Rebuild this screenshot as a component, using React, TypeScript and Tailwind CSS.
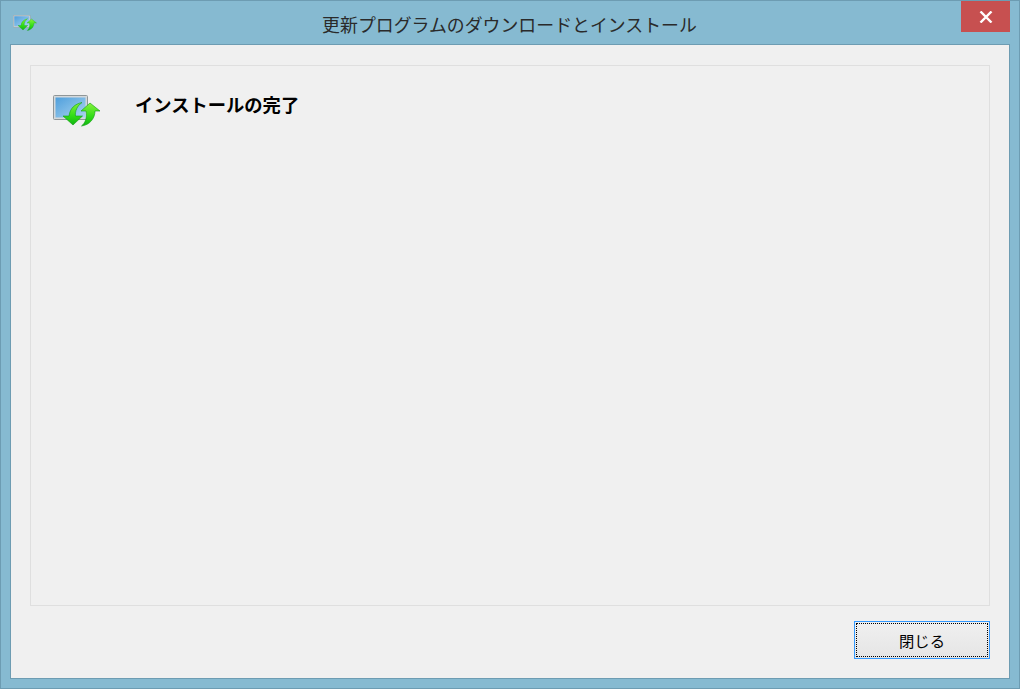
const jp = "font-['Noto_Sans_CJK_JP','Noto_Sans',sans-serif]";

function UpdateIcon({ className }: { className: string }) {
  return (
    <svg viewBox="0 0 48 36" className={className}>
      <defs>
        <linearGradient id="scr" x1="0" y1="0" x2="1" y2="1">
          <stop offset="0" stopColor="#4f9fdc" />
          <stop offset="1" stopColor="#a9d4f0" />
        </linearGradient>
        <linearGradient id="gr" x1="0" y1="0" x2="0" y2="1">
          <stop offset="0" stopColor="#86f23c" />
          <stop offset="0.6" stopColor="#2fdc16" />
          <stop offset="1" stopColor="#12b412" />
        </linearGradient>
      </defs>
      <rect x="0.5" y="0.5" width="34" height="24" rx="1" fill="#d4d8da" stroke="#8f9698" />
      <rect x="2.5" y="2.5" width="30" height="20" fill="url(#scr)" />
      <path d="M29 7.500 C22 9 17 13 16 21 L10 21 L20 30 L29.500 21 L22.500 21 C22 16 24 11 29 7.500 Z" fill="url(#gr)" stroke="#0f9c12" strokeWidth="0.6" />
      <path d="M37 8 L47 16 L42 16 C42 23 37 30 28.500 31 C32 28 34.500 23 33 16 L28 16 Z" fill="url(#gr)" stroke="#0f9c12" strokeWidth="0.6" />
    </svg>
  );
}

export default function App() {
  return (
    <div className={`w-[1020px] h-[689px] bg-[#86bad1] border border-[#6d9cb2] flex flex-col overflow-hidden ${jp}`}>
      <div className="h-[43px] shrink-0 flex items-start">
        <UpdateIcon className="w-[24px] h-[18px] ml-[12px] mt-[14px] shrink-0" />
        <div className="flex-1 flex justify-center mt-[7px] text-[17.900px] leading-[32px] text-[#2a2a2a] pl-[21px]">
          更新プログラムのダウンロードとインストール
        </div>
        <div className="w-[49px] h-[31px] bg-[#c75050] mr-[9px] shrink-0 flex items-center justify-center">
          <svg viewBox="0 0 14 12" className="w-[14px] h-[12px]">
            <path d="M1.500 0.500 L12.500 11.500 M12.500 0.500 L1.500 11.500" stroke="#fff" strokeWidth="2.400" fill="none" />
          </svg>
        </div>
      </div>
      <div className="flex-1 mx-[9px] mb-[9px] bg-[#f0f0f0] border border-[#6d9cb2] flex flex-col px-[19px] pt-[20px] pb-[19px]">
        <div className="flex-1 border border-[#dfdfdf] flex items-start pl-[22px] pt-[29px]">
          <UpdateIcon className="w-[48px] h-[36px] shrink-0" />
          <div className="ml-[34px] -mt-[5px] text-[18.3px] leading-[28px] font-bold text-black">インストールの完了</div>
        </div>
        <div className="flex justify-end mt-[15px]">
          <div className="w-[136px] h-[38px] border border-[#3399ff] bg-gradient-to-b from-[#f0f0f0] to-[#e5e5e5] p-[1px]">
            <div className="w-full h-full border border-dotted border-black flex items-center justify-center text-[15.300px] text-black">
              閉じる
            </div>
          </div>
        </div>
      </div>
    </div>
  );
}
